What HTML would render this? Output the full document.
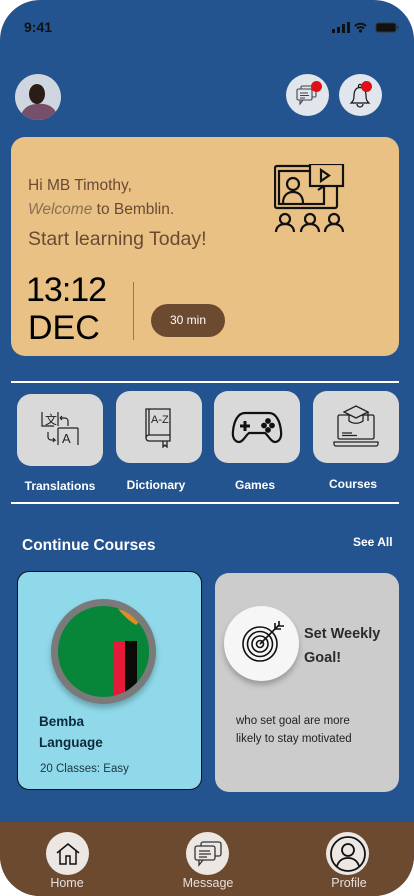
<!DOCTYPE html>
<html><head><meta charset="utf-8"><style>
*{margin:0;padding:0;box-sizing:border-box}
body{width:414px;height:896px;background:#fff;font-family:"Liberation Sans",sans-serif;overflow:hidden;position:relative}
.phone{position:absolute;left:0;top:0;width:414px;height:896px;background:#24548f;border-radius:40px;overflow:hidden}
.abs{position:absolute}
.tile{position:absolute;width:86px;height:72px;background:#d9d9d9;border-radius:14px;display:flex;align-items:center;justify-content:center}
.lbl{position:absolute;color:#fff;font-weight:bold;font-size:12px;text-align:center;width:110px}
.navc{position:absolute;width:43px;height:43px;border-radius:50%;background:#ede7e3;display:flex;align-items:center;justify-content:center}
.navl{position:absolute;color:#e8e0dc;font-size:12.5px;text-align:center;width:90px}
</style></head><body>
<div class="phone">
<div class="abs" style="left:24px;top:19px;color:#111;font-weight:bold;font-size:14px">9:41</div>
<svg class="abs" style="left:332px;top:21px" width="68" height="13" viewBox="0 0 68 13">
<rect x="0" y="8" width="3" height="4" fill="#111"/><rect x="5" y="6" width="3" height="6" fill="#111"/><rect x="10" y="3" width="3" height="9" fill="#111"/><rect x="15" y="1" width="3" height="11" fill="#111"/>
<path d="M23 5a8 8 0 0 1 11 0M25 7.5a5 5 0 0 1 7 0" stroke="#111" stroke-width="2" fill="none"/><circle cx="28.5" cy="10" r="1.6" fill="#111"/>
<rect x="44" y="2" width="20" height="9" rx="2.5" fill="#111" stroke="#333"/><rect x="65" y="5" width="1.5" height="3" fill="#333"/></svg>
<!-- avatar -->
<svg class="abs" style="left:15px;top:74px" width="46" height="46" viewBox="0 0 46 46">
<defs><clipPath id="av"><circle cx="23" cy="23" r="23"/></clipPath></defs>
<g clip-path="url(#av)"><rect width="46" height="46" fill="#cfd6e0"/>
<ellipse cx="22" cy="20" rx="8" ry="10" fill="#2a1d18"/>
<path d="M4 46 Q8 30 22 30 Q40 28 44 46Z" fill="#76506a"/></g></svg>
<!-- chat btn -->
<div class="abs" style="left:286px;top:74px;width:43px;height:42px;border-radius:50%;background:#e1e5ec"></div>
<svg class="abs" style="left:296px;top:84px" width="22" height="22" viewBox="0 0 22 22" fill="none" stroke="#444" stroke-width="1.1"><rect x="5" y="2" width="15" height="11" rx="1.5"/><rect x="1" y="5" width="15" height="11" rx="1.5" fill="#e1e5ec"/><path d="M4 16v4l3-4"/><path d="M4 9h8M4 11.5h9M4 14h5"/></svg>
<div class="abs" style="left:311px;top:81px;width:11px;height:11px;border-radius:50%;background:#e10f14"></div>
<!-- bell btn -->
<div class="abs" style="left:339px;top:74px;width:43px;height:42px;border-radius:50%;background:#e1e5ec"></div>
<svg class="abs" style="left:349px;top:83px" width="22" height="26" viewBox="0 0 22 26" fill="none" stroke="#111" stroke-width="1.2"><circle cx="11" cy="3" r="1.6"/><path d="M11 4.5C6 4.5 5 9 5 13c0 4-1 5-3 7h18c-2-2-3-3-3-7 0-4-1-8.5-6-8.5Z"/><path d="M8 21a3 3 0 0 0 6 0"/></svg>
<div class="abs" style="left:361px;top:81px;width:11px;height:11px;border-radius:50%;background:#e10f14"></div>
<!-- welcome card -->
<div class="abs" style="left:11px;top:137px;width:388px;height:219px;background:#e9c185;border-radius:14px"></div>
<div class="abs" style="left:28px;top:177px;color:#6a4a34;font-size:15.5px">Hi MB Timothy,</div>
<div class="abs" style="left:28px;top:201px;color:#6a4a34;font-size:15.5px"><i style="color:#8a7055;font-weight:300">Welcome</i> to Bemblin.</div>
<div class="abs" style="left:28px;top:228px;color:#6a4a34;font-size:19.5px">Start learning Today!</div>
<div class="abs" style="left:26px;top:271px;color:#000;font-size:34px;letter-spacing:-1px">13:12</div>
<div class="abs" style="left:28px;top:309px;color:#000;font-size:34px">DEC</div>
<div class="abs" style="left:133px;top:282px;width:1px;height:58px;background:#7f7a78"></div>
<div class="abs" style="left:151px;top:304px;width:74px;height:33px;border-radius:17px;background:#6b4a2f;color:#fff;font-size:12px;text-align:center;line-height:33px">30 min</div>
<svg class="abs" style="left:274px;top:164px" width="72" height="68" viewBox="0 0 72 68" fill="none" stroke="#111" stroke-width="2.2">
<rect x="1" y="2" width="62" height="42" rx="2"/><rect x="5" y="7" width="45" height="33"/>
<rect x="36" y="0" width="33" height="22" fill="#e9c185"/><path d="M44 26l6-4"/><path d="M47 6v11l8-5.5Z"/>
<circle cx="19" cy="20" r="6"/><path d="M9 39c0-8 5-11 10-11s10 3 10 11"/>
<circle cx="11" cy="55" r="5"/><circle cx="36" cy="55" r="5"/><circle cx="60" cy="55" r="5"/>
<path d="M2 68c0-5 4-8 9-8s9 3 9 8M27 68c0-5 4-8 9-8s9 3 9 8M51 68c0-5 4-8 9-8s9 3 9 8"/></svg>
<!-- dividers -->
<div class="abs" style="left:11px;top:381px;width:388px;height:2px;background:#fff"></div>
<div class="abs" style="left:11px;top:502px;width:388px;height:2px;background:#fff"></div>
<!-- tiles -->
<div class="tile" style="left:17px;top:394px">
<svg width="44" height="40" viewBox="0 0 44 40" fill="none" stroke="#222" stroke-width="1.2"><path d="M4 2v14h12M20 2v14"/><text x="7" y="14" font-size="12" fill="#222" stroke="none" font-family="Liberation Sans">文</text><path d="M22 8h5a3 3 0 0 1 3 3v5M22 8l2-2M22 8l2 2"/><path d="M20 18v17M40 18v17M20 18h20"/><text x="24" y="33" font-size="13" fill="#222" stroke="none" font-family="Liberation Sans">A</text><path d="M10 22v5a3 3 0 0 0 3 3h4l-2-2M17 30l-2 2"/></svg></div>
<div class="tile" style="left:116px;top:391px">
<svg width="32" height="42" viewBox="0 0 32 42" fill="none" stroke="#222" stroke-width="1.3"><path d="M3 3h24v32H6a3 3 0 0 1-3-3Z"/><path d="M3 32a3 3 0 0 1 3-3h21M6 3v26"/><path d="M20 35v6l2-2 2 2v-6"/><text x="8" y="17" font-size="11" fill="#222" stroke="none" font-family="Liberation Sans">A-Z</text></svg></div>
<div class="tile" style="left:214px;top:391px">
<svg width="52" height="36" viewBox="0 0 52 36" fill="none" stroke="#111" stroke-width="2.2"><path d="M14 4h24c7 0 11 8 12 18 1 8-3 11-6 11-4 0-7-7-10-9H18c-3 2-6 9-10 9-3 0-7-3-6-11 1-10 5-18 12-18Z"/><path d="M14 12v10M9 17h10" stroke-width="3"/><circle cx="37" cy="12" r="1.8" fill="#111"/><circle cx="37" cy="21" r="1.8" fill="#111"/><circle cx="33" cy="16.5" r="1.8" fill="#111"/><circle cx="41" cy="16.5" r="1.8" fill="#111"/></svg></div>
<div class="tile" style="left:313px;top:391px">
<svg width="48" height="44" viewBox="0 0 48 44" fill="none" stroke="#222" stroke-width="1.3"><rect x="6" y="10" width="36" height="24" rx="1.5"/><path d="M2 37h44v2a2 2 0 0 1-2 2H4a2 2 0 0 1-2-2Z"/><path d="M24 1 36 7 24 13 12 7Z" fill="#d9d9d9"/><path d="M17 10v6c4 3 10 3 14 0v-6M36 7v9"/><path d="M10 28h10M10 30.5h15"/></svg></div>
<div class="lbl" style="left:5px;top:479px">Translations</div>
<div class="lbl" style="left:101px;top:478px">Dictionary</div>
<div class="lbl" style="left:200px;top:478px">Games</div>
<div class="lbl" style="left:298px;top:477px">Courses</div>
<!-- continue -->
<div class="abs" style="left:22px;top:537px;color:#fff;font-weight:bold;font-size:15.5px">Continue Courses</div>
<div class="abs" style="left:353px;top:535px;color:#fff;font-weight:bold;font-size:12px">See All</div>
<div class="abs" style="left:17px;top:571px;width:185px;height:219px;background:#8fd9ea;border:1.3px solid #111;border-radius:12px"></div>
<div class="abs" style="left:51px;top:599px;width:105px;height:105px;border-radius:50%;background:#7a7a7a;box-shadow:0 4px 6px rgba(0,0,0,.25)"></div>
<svg class="abs" style="left:58px;top:606px" width="91" height="91" viewBox="0 0 91 91"><defs><clipPath id="fl"><circle cx="45.5" cy="45.5" r="45.5"/></clipPath></defs><g clip-path="url(#fl)"><rect width="91" height="91" fill="#078538"/><rect x="55" y="35" width="12" height="60" fill="#e31a3a"/><rect x="67" y="35" width="12" height="60" fill="#0b0a09"/><rect x="79" y="35" width="12" height="60" fill="#078538"/><path d="M60 3q12 2 22 12l-4 4q-10-6-18-16Z" fill="#e08a2a"/></g></svg>
<div class="abs" style="left:39px;top:711px;color:#0d2a3a;font-weight:bold;font-size:13.5px;line-height:21px">Bemba<br>Language</div>
<div class="abs" style="left:40px;top:763px;color:#1d3540;font-size:11.5px">20 Classes: Easy</div>
<div class="abs" style="left:215px;top:573px;width:184px;height:219px;background:#cccccc;border-radius:14px"></div>
<div class="abs" style="left:224px;top:606px;width:75px;height:75px;border-radius:50%;background:#f6f6f6;box-shadow:0 4px 6px rgba(0,0,0,.25)"></div>
<svg class="abs" style="left:242px;top:620px" width="44" height="44" viewBox="0 0 44 44" fill="none" stroke="#111" stroke-width="1.6"><circle cx="18" cy="24" r="17"/><circle cx="18" cy="24" r="12.5"/><circle cx="18" cy="24" r="8"/><circle cx="18" cy="24" r="3.5"/><path d="M18 24 37 5M33 3v6h6M37 1v5h5"/></svg>
<div class="abs" style="left:304px;top:622px;color:#2b2b2b;font-weight:bold;font-size:14.5px;line-height:24px">Set Weekly<br>Goal!</div>
<div class="abs" style="left:236px;top:712px;color:#222;font-size:11.5px;line-height:18px">who set goal are more<br>likely to stay motivated</div>
<!-- nav -->
<div class="abs" style="left:0;top:822px;width:414px;height:74px;background:#6b4a2f"></div>
<div class="navc" style="left:46px;top:832px"><svg width="26" height="24" viewBox="0 0 26 24" fill="none" stroke="#111" stroke-width="1.5"><path d="M2 11 13 2l11 9M5 9v13h6v-8h4v8h6V9"/></svg></div>
<div class="navc" style="left:186px;top:832px"><svg width="30" height="28" viewBox="0 0 30 28" fill="none" stroke="#333" stroke-width="1.3"><rect x="8" y="2" width="20" height="14" rx="2"/><rect x="2" y="6" width="20" height="14" rx="2" fill="#ede7e3"/><path d="M6 20v5l4-5"/><path d="M6 11h11M6 14h12M6 17h8"/></svg></div>
<div class="navc" style="left:326px;top:832px"><svg width="38" height="38" viewBox="0 0 38 38" fill="none" stroke="#111" stroke-width="1.8"><circle cx="19" cy="19" r="17"/><circle cx="19" cy="15" r="6"/><path d="M8 31c2-6 6-8 11-8s9 2 11 8"/></svg></div>
<div class="navl" style="left:22px;top:876px">Home</div>
<div class="navl" style="left:163px;top:876px">Message</div>
<div class="navl" style="left:304px;top:876px">Profile</div>
</div>
</body></html>
